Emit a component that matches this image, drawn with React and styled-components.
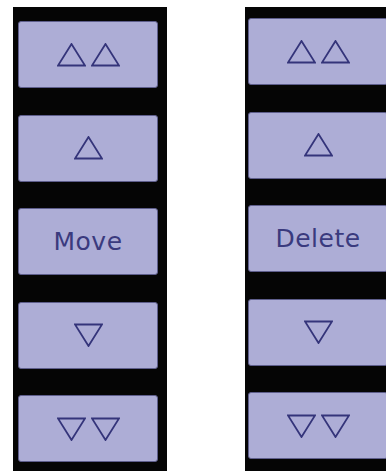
import React from 'react';
import styled, { createGlobalStyle } from 'styled-components';

const GlobalStyle = createGlobalStyle`
  html, body {
    margin: 0;
    padding: 0;
    background: #ffffff;
    overflow: hidden;
  }
`;

const Page = styled.div`
  display: flex;
  align-items: flex-start;
  padding: 7px 0 0 13px;
  height: 471px;
  box-sizing: border-box;
`;

const Panel = styled.div`
  background: #050505;
  width: 154px;
  height: 480px;
  flex-shrink: 0;
  box-sizing: border-box;
  margin-left: ${p => p.$offset || 0}px;
  padding: ${p => p.$top}px 9px 0 ${p => p.$left}px;
  display: flex;
  flex-direction: column;
  gap: 26.5px;
`;

const Button = styled.div`
  height: 67px;
  width: 140px;
  flex-shrink: 0;
  box-sizing: border-box;
  background: #adadd6;
  border: 1px solid #5e5e8c;
  border-radius: 3px;
  display: flex;
  align-items: center;
  justify-content: center;
  gap: 5px;
  color: #3a3a7e;
  font-family: "DejaVu Sans", sans-serif;
  font-size: 25px;
  letter-spacing: 0.5px;
`;

const Tri = ({ down }) => (
  <svg width="29" height="24" viewBox="0 0 29 24">
    <polygon
      points={down ? '1,1.5 28,1.5 14.5,23' : '14.5,1 1,22.5 28,22.5'}
      fill="none"
      stroke="#34347a"
      strokeWidth="1.8"
      strokeLinejoin="miter"
    />
  </svg>
);

const Column = ({ label, top, left, offset }) => (
  <Panel $top={top} $left={left} $offset={offset}>
    <Button><Tri /><Tri /></Button>
    <Button><Tri /></Button>
    <Button>{label}</Button>
    <Button><Tri down /></Button>
    <Button><Tri down /><Tri down /></Button>
  </Panel>
);

export default function App() {
  return (
    <>
      <GlobalStyle />
      <Page>
        <Column label="Move" top={14} left={5} />
        <Column label="Delete" top={11} left={3} offset={78} />
      </Page>
    </>
  );
}
